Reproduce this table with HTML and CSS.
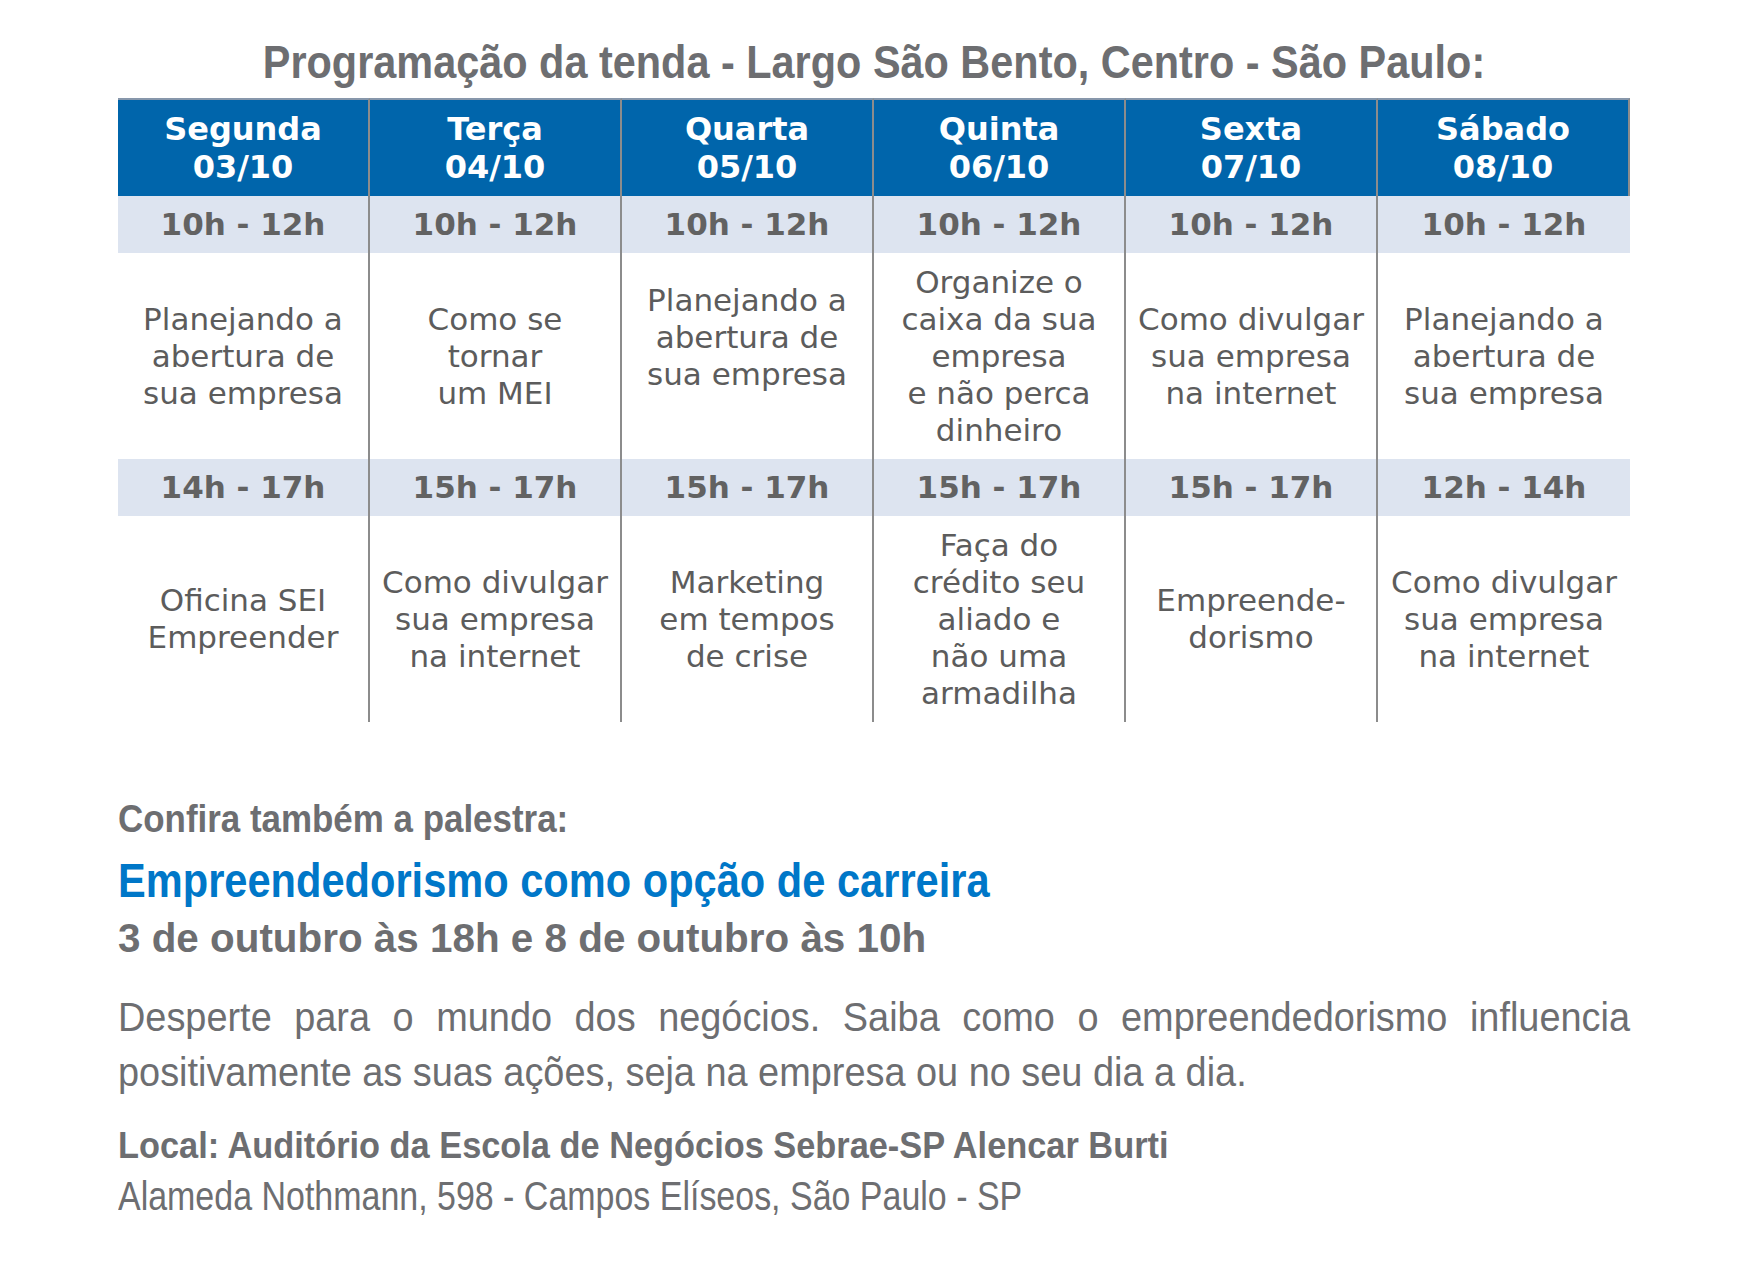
FILE: index.html
```html
<!DOCTYPE html>
<html lang="pt-BR">
<head>
<meta charset="utf-8">
<title>Programação da tenda</title>
<link rel="stylesheet" href="styles.css">
</head>
<body>
<main class="page">
  <h1 class="title"><span class="title-text">Programação da tenda - Largo São Bento, Centro - São Paulo:</span></h1>

  <section class="schedule">
    <div class="cell head">Segunda<br>03/10</div>
    <div class="cell head">Terça<br>04/10</div>
    <div class="cell head">Quarta<br>05/10</div>
    <div class="cell head">Quinta<br>06/10</div>
    <div class="cell head">Sexta<br>07/10</div>
    <div class="cell head last">Sábado<br>08/10</div>

    <div class="cell time">10h - 12h</div>
    <div class="cell time">10h - 12h</div>
    <div class="cell time">10h - 12h</div>
    <div class="cell time">10h - 12h</div>
    <div class="cell time">10h - 12h</div>
    <div class="cell time last">10h - 12h</div>

    <div class="cell topic">Planejando a<br>abertura de<br>sua empresa</div>
    <div class="cell topic">Como se<br>tornar<br>um MEI</div>
    <div class="cell topic">Planejando a<br>abertura de<br>sua empresa<br>&nbsp;</div>
    <div class="cell topic">Organize o<br>caixa da sua<br>empresa<br>e não perca<br>dinheiro</div>
    <div class="cell topic">Como divulgar<br>sua empresa<br>na internet</div>
    <div class="cell topic last">Planejando a<br>abertura de<br>sua empresa</div>

    <div class="cell time">14h - 17h</div>
    <div class="cell time">15h - 17h</div>
    <div class="cell time">15h - 17h</div>
    <div class="cell time">15h - 17h</div>
    <div class="cell time">15h - 17h</div>
    <div class="cell time last">12h - 14h</div>

    <div class="cell topic">Oficina SEI<br>Empreender</div>
    <div class="cell topic">Como divulgar<br>sua empresa<br>na internet</div>
    <div class="cell topic">Marketing<br>em tempos<br>de crise</div>
    <div class="cell topic">Faça do<br>crédito seu<br>aliado e<br>não uma<br>armadilha</div>
    <div class="cell topic">Empreende-<br>dorismo</div>
    <div class="cell topic last">Como divulgar<br>sua empresa<br>na internet</div>
  </section>

  <section class="talk">
    <p class="lead">Confira também a palestra:</p>
    <h2 class="talk-title">Empreendedorismo como opção de carreira</h2>
    <p class="dates">3 de outubro às 18h e 8 de outubro às 10h</p>
    <p class="desc">Desperte para o mundo dos negócios. Saiba como o empreendedorismo influencia positivamente as suas ações, seja na empresa ou no seu dia a dia.</p>
    <p class="place">Local: Auditório da Escola de Negócios Sebrae-SP Alencar Burti</p>
    <p class="address">Alameda Nothmann, 598 - Campos Elíseos, São Paulo - SP</p>
  </section>
</main>
</body>
</html>
```

FILE: styles.css
```css
* { box-sizing: border-box; }

html, body {
  margin: 0;
  padding: 0;
  background: #ffffff;
}

.page {
  width: 1512px;
  margin-left: 118px;
  padding-top: 32px;
  font-family: "Liberation Sans", Arial, sans-serif;
  color: #6d6e71;
}

.title {
  margin: 0 0 6px;
  font-size: 46.5px;
  line-height: 60px;
  font-weight: 700;
  text-align: center;
  color: #6d6e71;
  white-space: nowrap;
}

.title-text {
  display: inline-block;
  transform: scaleX(0.891);
  transform-origin: center;
}

.schedule {
  display: grid;
  grid-template-columns: repeat(6, 252px);
  grid-template-rows: 98px 57px 206px 57px 206px;
  font-family: "DejaVu Sans", Verdana, sans-serif;
}

.cell {
  display: flex;
  align-items: center;
  justify-content: center;
  text-align: center;
  border-right: 2px solid #8c8c8c;
}

.head {
  background: #0065ab;
  color: #ffffff;
  font-weight: 700;
  font-size: 32px;
  line-height: 38px;
  border-top: 2px solid #8797ab;
}

.time {
  background: #dde4f0;
  color: #626262;
  font-weight: 700;
  font-size: 31px;
  line-height: 57px;
}

.topic {
  background: #ffffff;
  color: #5c5c5c;
  font-size: 31px;
  line-height: 37px;
}

.time.last, .topic.last { border-right: 0; }

.talk p, .talk h2 {
  margin: 0;
  transform-origin: left center;
}

.talk .lead {
  margin-top: 75px;
  font-size: 38px;
  line-height: 44px;
  font-weight: 700;
  white-space: nowrap;
  transform: scaleX(0.919);
}

.talk .talk-title {
  margin-top: 11px;
  font-size: 49px;
  line-height: 56px;
  font-weight: 700;
  color: #0077c8;
  white-space: nowrap;
  transform: scaleX(0.849);
}

.talk .dates {
  margin-top: 6px;
  font-size: 40px;
  line-height: 48px;
  font-weight: 700;
  white-space: nowrap;
  transform: scaleX(1.01);
}

.talk .desc {
  margin-top: 28px;
  width: 1596.6px;
  font-size: 40px;
  line-height: 55px;
  text-align: justify;
  transform: scaleX(0.947);
}

.talk .place {
  margin-top: 22px;
  font-size: 37.5px;
  line-height: 46px;
  font-weight: 700;
  white-space: nowrap;
  transform: scaleX(0.916);
}

.talk .address {
  margin-top: 4px;
  font-size: 40px;
  line-height: 48px;
  white-space: nowrap;
  transform: scaleX(0.849);
}
```
